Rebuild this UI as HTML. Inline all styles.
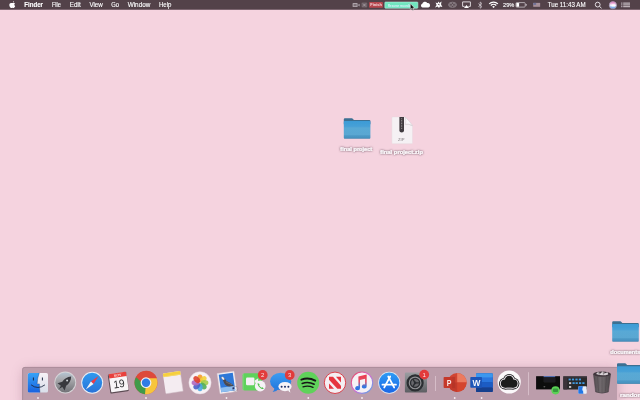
<!DOCTYPE html>
<html><head><meta charset="utf-8"><title>Desktop</title>
<style>
html,body{margin:0;padding:0;}
body{width:640px;height:400px;overflow:hidden;background:#f5d3df;position:relative;font-family:"Liberation Sans",sans-serif;}
svg{position:absolute;left:0;top:0;}
text{font-family:"Liberation Sans",sans-serif;}
.mi{font-size:6.6px;fill:#fff;stroke:#fff;stroke-width:.12;}
.b{font-weight:bold;}
.lbl{font-size:5.7px;font-weight:bold;fill:#fbf7fa;stroke:#fbf7fa;stroke-width:.22;text-anchor:middle;}
.lbs{font-size:6.6px;font-weight:bold;fill:#3a2a31;stroke:#3a2a31;stroke-width:.6;text-anchor:middle;opacity:.55;}
</style></head><body>
<svg width="640" height="400" viewBox="0 0 640 400">
<defs>
<filter id="sh" x="-20%" y="-60%" width="140%" height="220%"><feGaussianBlur in="SourceAlpha" stdDeviation=".8" result="b"/><feOffset in="b" dy=".3" result="o"/><feFlood flood-color="#5e4654" flood-opacity="1"/><feComposite in2="o" operator="in" result="s"/><feComponentTransfer in="s" result="s2"><feFuncA type="linear" slope="1.05"/></feComponentTransfer><feMerge><feMergeNode in="s2"/><feMergeNode in="SourceGraphic"/></feMerge></filter>
<filter id="dsh" x="0" y="330" width="640" height="80" filterUnits="userSpaceOnUse"><feGaussianBlur stdDeviation="6.5"/></filter>
<filter id="soft" x="-10" y="-10" width="660" height="420" filterUnits="userSpaceOnUse"><feGaussianBlur stdDeviation="0.3"/></filter>
<filter id="bl2" x="-20%" y="-20%" width="140%" height="140%"><feGaussianBlur stdDeviation="0.35"/></filter>
<linearGradient id="fold" x1="0" y1="0" x2="0" y2="1"><stop offset="0" stop-color="#3c9bd6"/><stop offset=".3" stop-color="#47a0d6"/><stop offset=".4" stop-color="#59a9d5"/><stop offset=".78" stop-color="#5aa7d2"/><stop offset=".84" stop-color="#4c98c5"/><stop offset="1" stop-color="#4791bf"/></linearGradient>
<linearGradient id="lp" x1="0" y1="0" x2="0" y2="1"><stop offset="0" stop-color="#b4c4d2"/><stop offset=".35" stop-color="#a9a9ad"/><stop offset="1" stop-color="#707176"/></linearGradient>
<linearGradient id="saf" x1="0" y1="0" x2="0" y2="1"><stop offset="0" stop-color="#2f9af0"/><stop offset="1" stop-color="#2a73d8"/></linearGradient>
<linearGradient id="aps" x1="0" y1="0" x2="0" y2="1"><stop offset="0" stop-color="#2f9cf5"/><stop offset="1" stop-color="#1a66e6"/></linearGradient>
<linearGradient id="msg" x1="0" y1="0" x2="0" y2="1"><stop offset="0" stop-color="#3b9df2"/><stop offset="1" stop-color="#2277dd"/></linearGradient>
<linearGradient id="itr" x1="0" y1="0" x2="1" y2="1"><stop offset="0" stop-color="#e8465e"/><stop offset=".5" stop-color="#d56bd0"/><stop offset="1" stop-color="#4aa8ee"/></linearGradient>
<linearGradient id="itn" x1="0" y1="0" x2="0" y2="1"><stop offset="0" stop-color="#ee3a4c"/><stop offset=".45" stop-color="#e0506a"/><stop offset=".75" stop-color="#3a78e0"/><stop offset="1" stop-color="#2a6fe0"/></linearGradient>
<linearGradient id="sp" x1="0" y1="0" x2="0" y2="1"><stop offset="0" stop-color="#9b9da1"/><stop offset="1" stop-color="#5c5e62"/></linearGradient>
<linearGradient id="fdl" x1="0" y1="0" x2="0" y2="1"><stop offset="0" stop-color="#35a3f7"/><stop offset="1" stop-color="#1a62e0"/></linearGradient>
<linearGradient id="fdr" x1="0" y1="0" x2="0" y2="1"><stop offset="0" stop-color="#f6f1f6"/><stop offset="1" stop-color="#d9dfea"/></linearGradient>
<linearGradient id="tr" x1="0" y1="0" x2="1" y2="0"><stop offset="0" stop-color="#4a4548"/><stop offset=".45" stop-color="#6d686b"/><stop offset="1" stop-color="#444042"/></linearGradient>
<linearGradient id="siri" x1="0" y1="0" x2="0" y2="1"><stop offset="0" stop-color="#e66ab8"/><stop offset=".5" stop-color="#f4f0fa"/><stop offset="1" stop-color="#3f8fe8"/></linearGradient>
</defs>

<g filter="url(#soft)">
<rect x="-10" y="-10" width="660" height="420" fill="#f5d3df"/>
<rect x="-10" y="-10" width="660" height="19" fill="#52424a"/><rect x="-10" y="9" width="660" height="1" fill="#7b666f"/>
<g transform="translate(9,1)" fill="#fff"><path d="M3.9 1.6 C3.9 .9 4.4 .3 5 0 C5.1 .7 4.6 1.4 3.9 1.6Z"/><path d="M3.2 2.1 C3.7 2.1 4 1.8 4.6 1.8 C5.1 1.8 5.7 2.1 6 2.6 C5 3.2 5.1 4.6 6.2 5 C5.9 5.8 5.2 7 4.6 7 C4.1 7 4 6.7 3.4 6.7 C2.8 6.7 2.6 7 2.2 7 C1.4 7 .3 5.3 .3 4 C.3 2.7 1.1 1.9 2 1.9 C2.5 1.9 2.9 2.1 3.2 2.1Z"/></g>
<text x="24.2" y="7.3" textLength="18.8" lengthAdjust="spacingAndGlyphs" class="mi b">Finder</text>
<text x="51.9" y="7.3" textLength="9.1" lengthAdjust="spacingAndGlyphs" class="mi">File</text>
<text x="69.8" y="7.3" textLength="11" lengthAdjust="spacingAndGlyphs" class="mi">Edit</text>
<text x="89.4" y="7.3" textLength="13.3" lengthAdjust="spacingAndGlyphs" class="mi">View</text>
<text x="111.2" y="7.3" textLength="7.8" lengthAdjust="spacingAndGlyphs" class="mi">Go</text>
<text x="127.7" y="7.3" textLength="22.6" lengthAdjust="spacingAndGlyphs" class="mi">Window</text>
<text x="158.9" y="7.3" textLength="12.5" lengthAdjust="spacingAndGlyphs" class="mi">Help</text>
<text x="503" y="6.6" textLength="11.3" lengthAdjust="spacingAndGlyphs" class="mi" style="font-size:5.7px">29%</text>
<text x="547.7" y="7.3" textLength="37.9" lengthAdjust="spacingAndGlyphs" class="mi">Tue 11:43 AM</text>
<g fill="#ada3a9"><rect x="352.6" y="3.1" width="5" height="3.9" rx=".6"/><path d="M357.8 5.05 L359.6 3.7 V6.4Z"/></g><rect x="353.6" y="4" width="3" height="2.1" fill="#7d7077"/>
<rect x="361.5" y="2.6" width="5.8" height="4.9" rx="1" fill="#6f6269"/><path d="M363.1 3.7 L365.7 6.4 M365.7 3.7 L363.1 6.4" stroke="#b3a9ae" stroke-width=".7"/>
<rect x="369.1" y="2.1" width="13.8" height="5.6" rx=".8" fill="#b9474f"/><text x="370.3" y="6.4" textLength="11.6" lengthAdjust="spacingAndGlyphs" style="font-size:4.3px;font-weight:bold;fill:#f4dadd">Finish</text>
<rect x="384.8" y="2" width="33.1" height="6.3" rx=".8" fill="#6fe6bf" stroke="#c9f5e6" stroke-width=".5"/><text x="388" y="6.5" textLength="25" lengthAdjust="spacingAndGlyphs" style="font-size:4.2px;font-weight:bold;fill:#dcf0fb">Resume recording</text>
<path d="M422.6 7.5 a1.9 1.9 0 0 1 -.3 -3.7 a2.6 2.6 0 0 1 4.9 -.7 a2.1 2.1 0 0 1 1.2 4.4Z" fill="#fff"/>
<path d="M435 7.6 L436.6 5 L435.6 2.6 L437.6 3.2 L438.4 1.4 L439.4 3 L441.6 1.6 L441 4.2 L442.4 7 L440 6.6 L439 8 L437.6 6.6Z" fill="#fff"/><path d="M437.8 4.6 L439.2 3.6 L439.6 5.4Z" fill="#52424a"/>
<g fill="none" stroke="#8f8389" stroke-width=".9"><ellipse cx="452.5" cy="4.8" rx="4" ry="2.6"/><circle cx="451" cy="4.9" r="1.4"/><circle cx="454" cy="4.9" r="1.4"/></g>
<path d="M464.6 6.4 H462.6 V1.9 H470.4 V6.4 H468.4" fill="none" stroke="#e9e3e6" stroke-width=".9"/><path d="M466.5 5 L469 8 H464Z" fill="#fff"/>
<path d="M478.4 3.6 L482 6.6 L480.2 8.2 V2 L482 3.6 L478.4 6.6" fill="none" stroke="#d9d1d5" stroke-width=".7"/>
<g fill="none" stroke="#fff" stroke-width="1.25" stroke-linecap="butt"><path d="M489.2 3.9 A6.2 6.2 0 0 1 497.9 3.9"/><path d="M490.8 5.5 A3.9 3.9 0 0 1 496.3 5.5"/></g><path d="M493.55 8.1 L492.2 6.7 A1.9 1.9 0 0 1 494.9 6.7Z" fill="#fff"/>
<rect x="516" y="2.6" width="9.2" height="4.5" rx=".9" fill="none" stroke="#d9d1d6" stroke-width=".7"/><rect x="516.4" y="3" width="2.7" height="3.7" rx=".4" fill="#fff"/><rect x="525.7" y="4" width=".9" height="1.7" fill="#d9d1d6"/>
<rect x="533.3" y="2.9" width="6.8" height="3.8" fill="#b7a9b0"/><rect x="533.3" y="2.9" width="3" height="2" fill="#6f6f95"/><path d="M536.3 3.5 H540.1 M536.3 4.5 H540.1 M533.3 5.5 H540.1 M533.3 6.4 H540.1" stroke="#93757f" stroke-width=".45"/>
<circle cx="597.7" cy="4.6" r="2.4" fill="none" stroke="#f1ecef" stroke-width=".9"/><path d="M599.5 6.4 L601.5 8.2" stroke="#f1ecef" stroke-width="1"/>
<circle cx="612.9" cy="5.2" r="3.6" fill="url(#siri)" stroke="#a79ab5" stroke-width=".8"/><ellipse cx="613.4" cy="5.4" rx="2" ry="1.2" fill="#fff" opacity=".8"/>
<g fill="#d6cdd2"><rect x="621.2" y="2.6" width="1.2" height="1"/><rect x="623.2" y="2.6" width="6.8" height="1"/><rect x="621.2" y="4.4" width="1.2" height="1"/><rect x="623.2" y="4.4" width="6.8" height="1"/><rect x="621.2" y="6.2" width="1.2" height="1"/><rect x="623.2" y="6.2" width="6.8" height="1"/></g>
<path d="M410.3 3.6 L410.3 9.6 L411.7 8.4 L412.7 10.6 L413.7 10.1 L412.7 8 L414.5 7.9Z" fill="#111" stroke="#eee" stroke-width=".5"/>
<g transform="translate(343.8,118.2)"><path d="M0 1.1 Q0 0 1.1 0 H8 Q8.7 0 9.2 .7 L10.1 1.8 H25.6 Q26.6 1.8 26.6 2.8 V6 H0Z" fill="#3a6f92"/><rect x="0" y="2.9" width="26.6" height="17.5" rx=".8" fill="url(#fold)"/><rect x=".3" y="19.7" width="26" height=".7" fill="#3b7fa8" opacity=".7"/></g>
<text x="356.3" y="151.4" class="lbl" textLength="31.9" lengthAdjust="spacingAndGlyphs" filter="url(#sh)">final project</text>
<g transform="translate(391.9,116.9)"><path d="M0 .8 Q0 0 .8 0 H13.2 Q17 3.6 20.6 8.6 V26 Q20.6 26.8 19.8 26.8 H.8 Q0 26.8 0 26Z" fill="#f5f1f4" stroke="#e6d6dd" stroke-width=".4"/><path d="M13.2 0 Q14.8 4.6 13.4 7.2 Q16.8 6.6 20.6 8.6 Q17 3.6 13.2 0Z" fill="#fbf9fb" stroke="#d2cbd0" stroke-width=".5"/><path d="M12.6 7.8 Q16.6 7 20.6 9.4 V8.6 Q16.8 6.6 13.4 7.2Z" fill="#cfc7cc" opacity=".7"/><path d="M7.5 0 H12.1 V13.6 Q12.1 15.6 9.8 15.6 Q7.5 15.6 7.5 13.6Z" fill="#403b3f"/><path d="M9.8 1.5 V12" stroke="#b9b3b7" stroke-width=".9" stroke-dasharray=".8 .8"/><text x="9.4" y="24.4" text-anchor="middle" style="font-size:4.2px;fill:#807a7e">ZIP</text></g>
<text x="401.6" y="153.9" class="lbl" textLength="42.7" lengthAdjust="spacingAndGlyphs" filter="url(#sh)">final project.zip</text>
<g transform="translate(612.2,321.2)"><path d="M0 1.1 Q0 0 1.1 0 H8 Q8.7 0 9.2 .7 L10.1 1.8 H25.6 Q26.6 1.8 26.6 2.8 V6 H0Z" fill="#3a6f92"/><rect x="0" y="2.9" width="26.6" height="17.5" rx=".8" fill="url(#fold)"/><rect x=".3" y="19.7" width="26" height=".7" fill="#3b7fa8" opacity=".7"/></g>
<text x="625.3" y="354.2" class="lbl" textLength="30" lengthAdjust="spacingAndGlyphs" filter="url(#sh)">documents</text>
<rect x="24" y="370" width="593" height="40" fill="#7a4660" opacity=".36" filter="url(#dsh)"/>
<path d="M22.25 410 V369.5 Q22.25 367 24.75 367 H617 V410Z" fill="#bc9dab"/><path d="M22.6 410 V369.6 Q22.6 367.4 24.9 367.4 H617" fill="none" stroke="#a88b99" stroke-width=".9"/>
<rect x="435" y="376" width="1" height="15" fill="#d6bdc8"/><rect x="528" y="372.2" width="1" height="23" fill="#d6bdc8"/>
<circle cx="38" cy="398" r=".9" fill="#f7eef2"/>
<circle cx="146" cy="398" r=".9" fill="#f7eef2"/>
<circle cx="226.5" cy="398" r=".9" fill="#f7eef2"/>
<circle cx="308.3" cy="398" r=".9" fill="#f7eef2"/>
<circle cx="362" cy="398" r=".9" fill="#f7eef2"/>
<circle cx="454.7" cy="398" r=".9" fill="#f7eef2"/>
<circle cx="481.6" cy="398" r=".9" fill="#f7eef2"/>
<g transform="translate(27.8,372.9)"><rect x="0" y="0" width="20.2" height="19.6" rx="1.6" fill="url(#fdr)"/><path d="M0 1.6 Q0 0 1.6 0 H11.5 Q9.5 5 9.3 11 H11.6 Q11.6 15 12.2 19.6 H1.6 Q0 19.6 0 18Z" fill="url(#fdl)"/><path d="M5.6 5 V7.2 M14.6 5 V7.2" stroke="#1e2a44" stroke-width="1" stroke-linecap="round"/><path d="M3.6 12.2 Q10 17.2 16.8 12.2" fill="none" stroke="#1e2a44" stroke-width=".9" stroke-linecap="round"/><path d="M11.5 0 Q9.5 5 9.3 11 H11.6 Q11.6 15 12.2 19.6" fill="none" stroke="#1e3a6a" stroke-width=".5" opacity=".7"/></g>
<g transform="translate(65.3,382.5)"><circle r="10.9" fill="#d6d4d7"/><circle r="10" fill="url(#lp)"/><path d="M5.9 -6.1 C2 -5.9 -1.2 -3.6 -3 -.8 L-7.8 .8 L-4.4 3.2 L-6.4 6.6 L-3 4.6 L-.6 8 L.8 3.2 C3.6 1.4 5.8 -2 5.9 -6.1Z" fill="#37383d"/><circle cx="1.8" cy="-2" r="1" fill="#cfd2d6"/></g>
<g transform="translate(92.2,382.7)"><circle r="11" fill="#e9eef5"/><circle r="10" fill="url(#saf)"/><path d="M6.4 -6.8 L1.3 1.3 L-1.3 -1.3Z" fill="#ee3b46"/><path d="M-6.4 6.8 L1.3 1.3 L-1.3 -1.3Z" fill="#f3f4f6"/></g>
<g transform="translate(118.5,382.3) rotate(-8.3)"><rect x="-9.6" y="-9.4" width="18.8" height="19.6" rx="1.4" fill="#5b4b53"/><rect x="-8.6" y="-9.4" width="17.6" height="18.4" rx="1" fill="#f8f5f7"/><path d="M-8.6 -5.1 V-8.4 Q-8.6 -9.4 -7.6 -9.4 H8 Q9 -9.4 9 -8.4 V-5.1Z" fill="#e8403c"/><text x="0.2" y="-5.9" text-anchor="middle" style="font-size:3.5px;font-weight:bold;fill:#ffd9d4">NOV</text><text x="0.3" y="5.4" text-anchor="middle" textLength="11.4" lengthAdjust="spacingAndGlyphs" style="font-size:11px;fill:#2b2b2e">19</text></g>
<g transform="translate(146,382.7)"><circle r="11.5" fill="#dd4a3a"/><path d="M0 0 L-9.96 -5.75 A11.5 11.5 0 0 0 -1 11.46 L5 4Z" fill="#3f9a4a"/><path d="M0 0 L-1 11.46 A11.5 11.5 0 0 0 10.6 -4.4 L2 -4.4Z" fill="#f7c53a"/><path d="M0 -4.8 H10.8 A11.5 11.5 0 0 0 -9.96 -5.75 L-4 0Z" fill="#dd4a3a"/><circle r="5.4" fill="#f2eef2"/><circle r="4.2" fill="#2f7be6"/></g>
<g transform="translate(173,382.4) rotate(-8.5)"><rect x="-8.8" y="-10.2" width="17.6" height="20.4" rx=".7" fill="#f4ecf1"/><path d="M-8.8 10.2 H8.8 V-10.2" fill="none" stroke="#cdbbc5" stroke-width=".5"/><rect x="-8.8" y="-10.2" width="17.6" height="3.6" rx=".7" fill="#f6cf3d"/><rect x="-8.8" y="-7.4" width="17.6" height="1" fill="#f3d870"/></g>
<g transform="translate(200,382.8)"><circle r="11.1" fill="#f7f1f5" stroke="#e6d9e0" stroke-width=".5"/>
<ellipse cx="0" cy="-4.5" rx="2.7" ry="3.9" fill="#f39b2c" opacity=".9" transform="rotate(0)"/>
<ellipse cx="0" cy="-4.5" rx="2.7" ry="3.9" fill="#f3d23a" opacity=".9" transform="rotate(45)"/>
<ellipse cx="0" cy="-4.5" rx="2.7" ry="3.9" fill="#a5cc4a" opacity=".9" transform="rotate(90)"/>
<ellipse cx="0" cy="-4.5" rx="2.7" ry="3.9" fill="#52ae5a" opacity=".9" transform="rotate(135)"/>
<ellipse cx="0" cy="-4.5" rx="2.7" ry="3.9" fill="#4aa7e2" opacity=".9" transform="rotate(180)"/>
<ellipse cx="0" cy="-4.5" rx="2.7" ry="3.9" fill="#4a62c8" opacity=".9" transform="rotate(225)"/>
<ellipse cx="0" cy="-4.5" rx="2.7" ry="3.9" fill="#b06ac0" opacity=".9" transform="rotate(270)"/>
<ellipse cx="0" cy="-4.5" rx="2.7" ry="3.9" fill="#de4030" opacity=".9" transform="rotate(315)"/>
</g>
<g transform="translate(227,382.5) rotate(-8.2)"><rect x="-8.5" y="-10.2" width="17" height="20.4" fill="#f5eff3" stroke="#dccfd7" stroke-width=".4"/><rect x="-7.1" y="-8.8" width="14.2" height="17.6" fill="#2f78d8"/><rect x="-7.1" y="4.4" width="14.2" height="4.4" fill="#8dbdee"/><path d="M-4.6 -6.2 C-2.4 -7 -1.8 -3.8 -.2 -1.6 C1.8 .4 5 1.4 6.2 4.4 C3.8 4 1.6 4.8 -.6 3.4 C-3 2 -3.2 -1 -3.8 -3.2 C-4.2 -4.4 -5.4 -5 -4.6 -6.2Z" fill="#4b4a50"/><path d="M-4.6 -6.2 C-3 -7 -2.4 -5.4 -1.8 -3.6 C-2.8 -2.8 -3.4 -3.2 -3.8 -3.2 C-4.2 -4.4 -5.4 -5 -4.6 -6.2Z" fill="#e9e6ea"/><path d="M-1 -1 C1 1 3 1.6 4.6 3" stroke="#8a878c" stroke-width=".6" fill="none"/><circle cx="7.2" cy="7.4" r="2.6" fill="none" stroke="#8a7a86" stroke-width=".5" opacity=".8"/><circle cx="5.6" cy="6.6" r="1" fill="#22306a"/></g>
<g transform="translate(242.6,373.2)"><rect x="0" y="0" width="19.4" height="17.4" rx="2" fill="#5fd25c"/><rect x="0" y="0" width="1" height="17.4" rx=".5" fill="#8de08a" opacity=".6"/><rect x="3.4" y="4.4" width="8.4" height="7.6" rx="1.2" fill="#f4f0f4"/><path d="M12.2 7.4 L15.6 5 V11.4 L12.2 9Z" fill="#f4f0f4"/><circle cx="17.6" cy="12.8" r="5.4" fill="#f6f2f6"/><g transform="translate(.5,-.5) translate(17.2,13.2) scale(1.15) translate(-17.2,-13.2)"><path d="M15 10.6 C14.4 11.4 15.6 13.6 16.8 14.6 C18 15.8 19.6 16.4 20.2 15.6 L19.2 14.4 L18.4 14.8 C17.6 14.4 16.6 13.4 16.2 12.6 L16.6 11.8Z" fill="#4fc04c"/></g></g>
<g transform="translate(270,372.7)"><ellipse cx="10.6" cy="8.6" rx="10.6" ry="8.6" fill="url(#msg)"/><path d="M4.4 14 Q4.6 17.6 2.6 19.4 Q6.6 19 8.6 16Z" fill="#2a7fe0"/><ellipse cx="15" cy="13.9" rx="6.6" ry="4.6" fill="#f6f3f7"/><path d="M18 17.6 Q19 19.6 20.6 19.8 Q19.6 18.4 20 17Z" fill="#f6f3f7"/><circle cx="11.6" cy="14" r="1" fill="#1e2f66"/><circle cx="15" cy="14" r="1" fill="#1e2f66"/><circle cx="18.4" cy="14" r="1" fill="#1e2f66"/></g>
<g transform="translate(308.2,382.8)"><circle r="11" fill="#5fd25a"/><g fill="none" stroke="#161616" stroke-linecap="round"><path d="M-6.8 -3.2 Q.4 -5.6 7 -2.2" stroke-width="2"/><path d="M-6 .6 Q.2 -1.4 6 1.4" stroke-width="1.6"/><path d="M-5.2 4 Q0 2.4 4.8 4.6" stroke-width="1.3"/></g></g>
<g transform="translate(335,382.8)"><circle r="10.7" fill="#f4eff3" stroke="#d8323c" stroke-width=".9"/><path d="M-6 -6 H-2 L6 3 V6 H2.4 L-6 -3Z" fill="#e6353f"/><path d="M1 -6 H6 V-.4Z" fill="#e6353f"/><path d="M-6 .6 L-1 6 H-6Z" fill="#e6353f"/></g>
<g transform="translate(362,382.7)"><circle r="10.7" fill="#f6f1f5" stroke="url(#itr)" stroke-width="1.1"/><path d="M-2.6 -5.4 L4.6 -7.2 V3 A2.1 1.8 0 1 1 3.2 1.4 V-3.6 L-1.2 -2.5 V4.6 A2.1 1.8 0 1 1 -2.6 3Z" fill="url(#itn)" transform="translate(-.6,.1) scale(1.15)"/></g>
<g transform="translate(389.2,382.7)"><circle r="11" fill="#dfe8f4"/><circle r="10.2" fill="url(#aps)"/><g stroke="#fff" stroke-width="1.7" stroke-linecap="round" fill="none"><path d="M-5 4.8 L1 -6.2"/><path d="M5 4.8 L-1 -6.2"/><path d="M-6.8 2 H6.8"/></g></g>
<g transform="translate(404.9,372.6)"><rect x="0" y="0" width="22.1" height="20" rx="1" fill="url(#sp)"/><g transform="translate(10.2,10.3)"><circle r="7.5" fill="#8f9094" stroke="#2c2d31" stroke-width="2.2"/><circle r="4.6" fill="#67686d" stroke="#2c2d31" stroke-width="1.3"/><path d="M0 0 L4.7 0 M0 0 L-2.35 -4 M0 0 L-2.35 4" stroke="#2c2d31" stroke-width="1.4"/><circle r="1.3" fill="#2c2d31"/></g></g>
<circle cx="262.7" cy="375" r="4.9" fill="#e23b3b"/><text x="262.7" y="377.1" text-anchor="middle" style="font-size:6px;fill:#fbe4e4">2</text>
<circle cx="289.7" cy="375" r="4.9" fill="#e23b3b"/><text x="289.7" y="377.1" text-anchor="middle" style="font-size:6px;fill:#fbe4e4">3</text>
<circle cx="424.2" cy="374.6" r="4.9" fill="#e23b3b"/><text x="424.2" y="376.70000000000005" text-anchor="middle" style="font-size:6px;fill:#fbe4e4">1</text>
<g transform="translate(457.2,382.5)"><circle r="9.4" fill="#d14532"/><path d="M0 0 V-9.4 A9.4 9.4 0 0 1 9.4 0Z" fill="#ec7a5e"/><path d="M0 0 H9.4 A9.4 9.4 0 0 1 0 9.4Z" fill="#d4452f" /><path d="M0 0 V9.4 A9.4 9.4 0 0 1 -9.4 0 Z" fill="#c23a2b"/><rect x="-13.6" y="-5.6" width="8.6" height="11.2" rx=".8" fill="#c5392c"/><rect x="-5" y="-5.6" width="3" height="11.2" fill="#b03228" opacity=".7"/><text x="-10.5" y="3.4" textLength="4.7" lengthAdjust="spacingAndGlyphs" style="font-size:9.2px;font-weight:bold;fill:#fbeae6">P</text></g>
<g transform="translate(476,373.2)"><rect x="0" y="0" width="16.8" height="18.8" rx="1" fill="#1f4fa6"/><rect x="0" y="0" width="16.8" height="4.8" rx="1" fill="#3a97ee"/><rect x="0" y="4.2" width="16.8" height="5" fill="#2a76de"/><rect x="0" y="9.2" width="16.8" height="5" fill="#1f5cc4"/><rect x="0" y="14.2" width="16.8" height="4.6" rx="1" fill="#173f8e"/><rect x="-5.7" y="3.8" width="11.7" height="10.8" rx=".8" fill="#1c55b8"/><text x="-3.5" y="12.7" textLength="7.9" lengthAdjust="spacingAndGlyphs" style="font-size:9.2px;font-weight:bold;fill:#f4f6fb">W</text></g>
<g transform="translate(509.2,382)"><circle r="11.6" fill="#fbf8fa"/><g fill="#1c1c1e"><circle cx="-4.3" cy="1.6" r="5.90"/><circle cx="0" cy="-2.0" r="6.10"/><circle cx="4.3" cy="1.6" r="5.90"/><rect x="-4.3" y="-1.90" width="8.6" height="9.40"/></g><g fill="#f4eff3"><circle cx="-4.3" cy="1.6" r="5.00"/><circle cx="0" cy="-2.0" r="5.20"/><circle cx="4.3" cy="1.6" r="5.00"/><rect x="-4.3" y="-1.00" width="8.6" height="7.60"/></g><g fill="#1c1c1e"><circle cx="-4.3" cy="1.6" r="4.05"/><circle cx="0" cy="-2.0" r="4.25"/><circle cx="4.3" cy="1.6" r="4.05"/><rect x="-4.3" y="-0.05" width="8.6" height="5.70"/></g></g>
<rect x="536.1" y="376.2" width="23.9" height="13.2" fill="#0c0c0d"/><rect x="543.6" y="376.2" width="11.6" height="1" fill="#5a7fd0"/><rect x="543.6" y="377.8" width="12" height="4.6" fill="#1d1d20"/><rect x="543.6" y="386" width="1.6" height="1.4" fill="#555"/>
<circle cx="555.5" cy="390.3" r="4.1" fill="#5ad255"/><rect x="553" y="388.4" width="5" height="3.6" rx=".8" fill="#2f8d3a" opacity=".8"/>
<rect x="563.3" y="376.2" width="23.7" height="13.2" rx=".6" fill="#2b292c"/><rect x="563.3" y="376.2" width="23.7" height="1.2" fill="#47434a"/><rect x="563.3" y="377.4" width="4" height="12" fill="#3a3338"/>
<rect x="568.6" y="378.6" width="2.2" height="1.8" fill="#3f9be0"/>
<rect x="571.9" y="378.6" width="2.2" height="1.8" fill="#3f9be0"/>
<rect x="575.4" y="378.6" width="2.2" height="1.8" fill="#3f9be0"/>
<rect x="578.8" y="378.6" width="2.2" height="1.8" fill="#3f9be0"/>
<rect x="572.5" y="382.2" width="2.2" height="1.8" fill="#3f9be0"/>
<rect x="575.6" y="382.2" width="2.2" height="1.8" fill="#3f9be0"/>
<rect x="579" y="382.2" width="2.2" height="1.8" fill="#3f9be0"/>
<rect x="582.3" y="382.2" width="2.2" height="1.8" fill="#3f9be0"/>
<rect x="569" y="382.2" width="2.2" height="1.9" fill="#c9c4c8"/><rect x="569" y="386" width="2.2" height="1.9" fill="#c9c4c8"/>
<g transform="translate(578.3,386.3)"><rect x="0" y="0" width="8.4" height="7.5" rx=".8" fill="#e9eef6"/><path d="M0 .8 Q0 0 .8 0 H4.8 Q3.9 2 3.9 4.2 H4.8 Q4.8 6 5.1 7.5 H.8 Q0 7.5 0 6.7Z" fill="#2477e6"/></g>
<g transform="translate(593,370.5)"><path d="M.4 3.4 Q9 -.6 17.6 3.4 L15.4 21.4 Q9 24 2.6 21.4Z" fill="url(#tr)" opacity=".93"/><ellipse cx="9" cy="3.6" rx="8.7" ry="2.7" fill="#40363c"/><path d="M3 3.4 L5 1.4 L7.6 3 L9.6 .8 L12 2.8 L14.6 1.8 L15.2 4 Q9 6 3 3.4Z" fill="#d9d2d6"/><path d="M5 1.4 L7.6 3 L6 4.4Z M9.6 .8 L12 2.8 L10 4.6Z" fill="#8e858a"/><path d="M4.6 6 L5.6 21 M9 6.6 V22.4 M13.4 6 L12.4 21" stroke="#3b3137" stroke-width=".5" opacity=".6"/><path d="M.4 3.4 L2.6 21.4 Q9 24 15.4 21.4 L17.6 3.4" fill="none" stroke="#3d3339" stroke-width=".6" opacity=".7"/></g>
<g transform="translate(617,363.3)"><path d="M0 1.1 Q0 0 1.1 0 H8 Q8.7 0 9.2 .7 L10.1 1.8 H25.6 Q26.6 1.8 26.6 2.8 V6 H0Z" fill="#3a6f92"/><rect x="0" y="2.9" width="26.6" height="17.5" rx=".8" fill="url(#fold)"/><rect x=".3" y="19.7" width="26" height=".7" fill="#3b7fa8" opacity=".7"/></g>
<text x="631.5" y="396.8" class="lbl" textLength="23" lengthAdjust="spacingAndGlyphs" filter="url(#sh)">random</text>
</g></svg>
</body></html>
